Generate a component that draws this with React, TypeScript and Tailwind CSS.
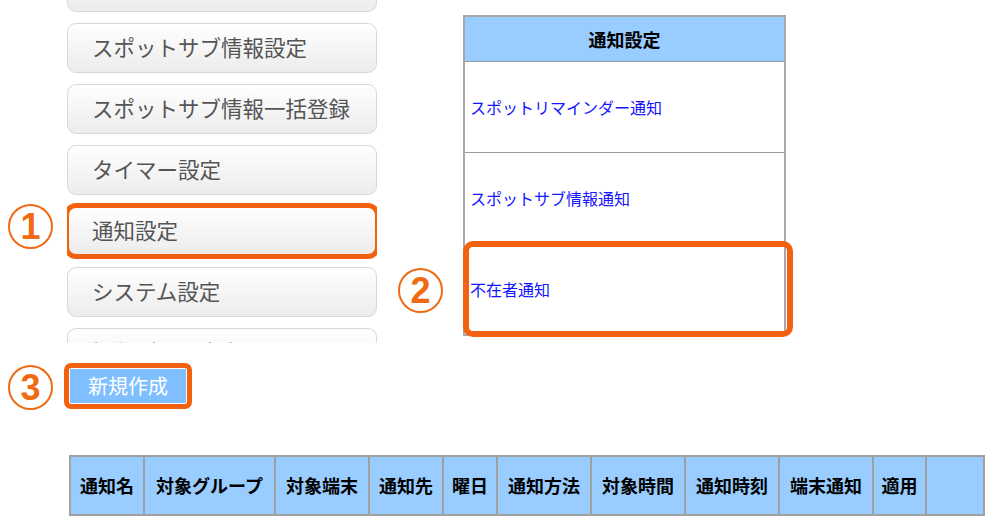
import React from 'react';

const JP = { fontFamily: '"Noto Sans CJK JP", "Noto Sans", sans-serif' };

const MENU = [
  'スポットサブ情報一覧',
  'スポットサブ情報設定',
  'スポットサブ情報一括登録',
  'タイマー設定',
  '通知設定',
  'システム設定',
  '操作データ出力',
];

const NOTIFY = ['スポットリマインダー通知', 'スポットサブ情報通知', '不在者通知'];

const COLS: [string, number][] = [
  ['通知名', 74],
  ['対象グループ', 131],
  ['対象端末', 94],
  ['通知先', 74],
  ['曜日', 54],
  ['通知方法', 94],
  ['対象時間', 94],
  ['通知時刻', 94],
  ['端末通知', 94],
  ['適用', 53],
  ['', 60],
];

// orange circled step number drawn over the screenshot
const Marker = ({ n, className }: { n: string; className: string }) => (
  <div
    className={`absolute w-[45px] h-[45px] rounded-full border-2 border-[#f06a14] flex items-center justify-center text-[#f06a14] text-[36px] font-bold leading-none ${className}`}
    style={{ fontFamily: '"Liberation Sans", Arial, sans-serif' }}
  >
    {n}
  </div>
);

export default function App() {
  return (
    <div className="relative w-[989px] h-[521px] bg-white overflow-hidden" style={JP}>
      <Marker n="1" className="left-[8px] top-[204px]" />
      <Marker n="2" className="left-[398px] top-[268px]" />
      <Marker n="3" className="left-[8px] top-[365px]" />

      <div className="flex pl-[67px] gap-[86px]">
        {/* side menu, scrolled */}
        <div className="w-[310px] h-[343px] overflow-hidden">
          <div className="-mt-[38px] flex flex-col gap-[11px]">
            {MENU.map((m) => (
              <div
                key={m}
                className={`h-[50px] shrink-0 rounded-[9px] border border-[#d8d8d8] bg-gradient-to-b from-white to-[#ececec] flex items-center pl-[24px] pb-[2px] text-[21.5px] text-[#555] ${
                  m === '通知設定' ? 'outline-[5px] outline-solid outline-[#f26110] outline-offset-[-2px]' : ''
                }`}
              >
                {m}
              </div>
            ))}
          </div>
        </div>

        {/* notify type table */}
        <div className="mt-[15px] w-[323px] h-[321px] border-2 border-[#a8a8a8] flex flex-col">
          <div className="h-[45px] bg-[#99ccff] border-b border-[#9a9a9a] flex items-center justify-center text-[18px] font-bold text-black">
            通知設定
          </div>
          {NOTIFY.map((t, i) => (
            <div
              key={t}
              className={`relative flex-1 flex items-center pl-[5px] text-[16px] text-[#1414ff] ${
                i === 0 ? 'border-b border-[#9a9a9a]' : ''
              }`}
            >
              {t}
              {i === 2 && (
                <div className="absolute -left-[2px] -right-[9px] -top-[3px] -bottom-[3px] rounded-[10px] border-[6px] border-[#f26110]" />
              )}
            </div>
          ))}
        </div>
      </div>

      {/* create button */}
      <div className="flex pl-[64px] pt-[20px]">
        <div className="w-[128px] h-[46px] rounded-[7px] border-[5px] border-[#f26110] p-px">
          <div className="h-full bg-[#7fbfff] flex items-center justify-center text-white text-[20px]">
            新規作成
          </div>
        </div>
      </div>

      {/* list header */}
      <div className="flex pl-[69px] pt-[46px]">
        <div className="w-[916px] flex h-[61px] border-2 border-[#a0a0a0] bg-[#99ccff]">
          {COLS.map(([c, w], i) => (
            <div
              key={i}
              className={`shrink-0 flex items-center justify-center text-[18px] font-bold text-black ${
                i < COLS.length - 1 ? 'border-r-2 border-[#a0a0a0]' : 'flex-1'
              }`}
              style={{ width: i < COLS.length - 1 ? w : undefined }}
            >
              {c}
            </div>
          ))}
        </div>
      </div>
    </div>
  );
}
